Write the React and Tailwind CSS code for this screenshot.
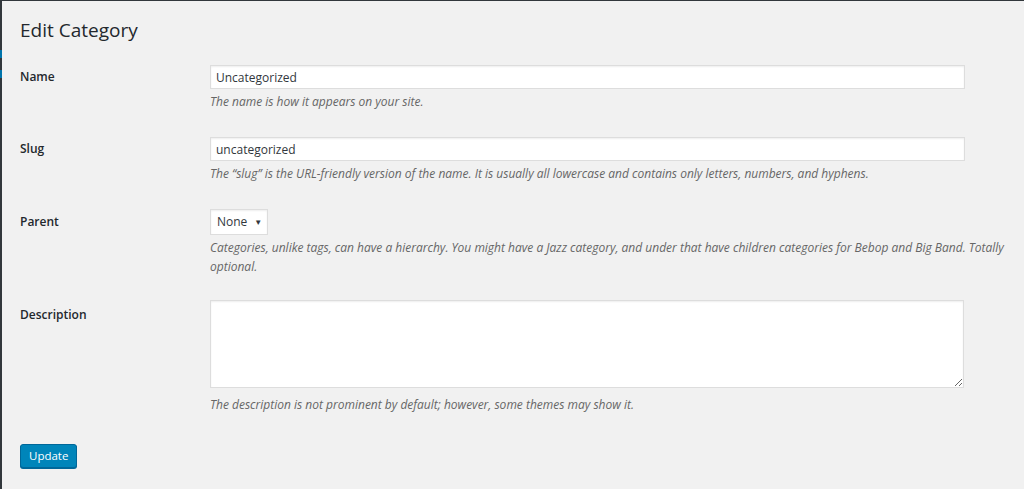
export default function App() {
  return (
    <div className="w-[1024px] h-[489px] bg-[#f1f1f1] flex overflow-hidden font-['Open_Sans',sans-serif] text-[#23282d]">
      {/* admin menu edge */}
      <div className="w-[2px] h-full bg-[#32373c] flex flex-col">
        <div className="h-[50px]" />
        <div className="h-[8px] bg-[#0073aa]" />
        <div className="h-[12px]" />
        <div className="h-[8px] bg-[#0073aa]" />
      </div>

      <div className="flex-1 flex flex-col border-t border-[#32373c]">
        <h1 className="ml-[18px] mt-[17px] text-[19px] leading-[24px] text-[#23282d]">Edit Category</h1>

        <div className="mt-[23px] flex flex-col">
          {/* Name */}
          <div className="flex">
            <label className="w-[208px] shrink-0 pl-[18px] pt-[3px] text-[12px] font-semibold">Name</label>
            <div className="flex flex-col">
              <input
                defaultValue="Uncategorized"
                className="w-[755px] h-[24px] bg-white border border-[#ddd] px-[5px] text-[12px] text-[#32373c] outline-none shadow-[inset_0_1px_2px_rgba(0,0,0,0.07)]"
              />
              <p className="mt-[4px] text-[12px] italic text-[#666]">The name is how it appears on your site.</p>
            </div>
          </div>

          {/* Slug */}
          <div className="flex mt-[26px]">
            <label className="w-[208px] shrink-0 pl-[18px] pt-[3px] text-[12px] font-semibold">Slug</label>
            <div className="flex flex-col">
              <input
                defaultValue="uncategorized"
                className="w-[755px] h-[24px] bg-white border border-[#ddd] px-[5px] text-[12px] text-[#32373c] outline-none shadow-[inset_0_1px_2px_rgba(0,0,0,0.07)]"
              />
              <p className="mt-[4px] text-[12px] italic text-[#666]">
                The “slug” is the URL-friendly version of the name. It is usually all lowercase and contains only letters, numbers, and hyphens.
              </p>
            </div>
          </div>

          {/* Parent */}
          <div className="flex mt-[26px]">
            <label className="w-[208px] shrink-0 pl-[18px] pt-[4px] text-[12px] font-semibold">Parent</label>
            <div className="flex flex-col items-start">
              <div className="h-[26px] bg-white border border-[#ddd] flex items-center pl-[6px] pr-[5px] gap-[7px] text-[12px] text-[#32373c] shadow-[inset_0_1px_2px_rgba(0,0,0,0.07)]">
                <span>None</span>
                <span className="text-[8px]">▼</span>
              </div>
              <p className="mt-[3px] w-[800px] text-[12px] leading-[19px] italic text-[#666]">
                Categories, unlike tags, can have a hierarchy. You might have a Jazz category, and under that have children categories for Bebop and Big Band. Totally optional.
              </p>
            </div>
          </div>

          {/* Description */}
          <div className="flex mt-[24px]">
            <label className="w-[208px] shrink-0 pl-[18px] pt-[6px] text-[12px] font-semibold">Description</label>
            <div className="flex flex-col">
              <textarea className="w-[754px] h-[88px] bg-white border border-[#ddd] outline-none resize-y shadow-[inset_0_1px_2px_rgba(0,0,0,0.07)]" />
              <p className="mt-[8px] text-[12px] italic text-[#666]">
                The description is not prominent by default; however, some themes may show it.
              </p>
            </div>
          </div>
        </div>

        <div className="mt-[28px] ml-[18px]">
          <button className="h-[24px] px-[8px] bg-[#0085ba] border border-[#006799] rounded-[3px] text-white text-[11.5px] shadow-[0_1px_0_#006799]">
            Update
          </button>
        </div>
      </div>
    </div>
  );
}
